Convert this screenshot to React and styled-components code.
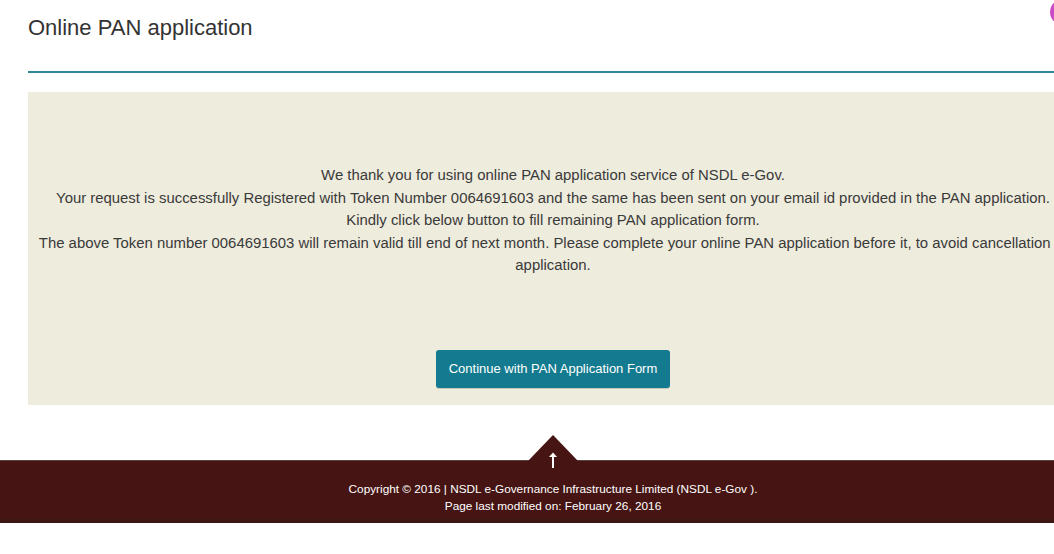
import styled, { createGlobalStyle } from "styled-components";

const GlobalStyle = createGlobalStyle`
  html, body {
    margin: 0;
    padding: 0;
    overflow: hidden;
    background: #fff;
  }
  body {
    font-family: "Liberation Sans", Arial, sans-serif;
    color: #333;
  }
`;

const Page = styled.div`
  position: relative;
  width: 1106px;
`;

const Main = styled.main`
  margin: 0 28px;
`;

const Header = styled.header`
  box-sizing: border-box;
  height: 73px;
  padding-top: 15px;
  border-bottom: 2px solid #2f8898;
`;

const Title = styled.h1`
  margin: 0;
  font-size: 22px;
  font-weight: normal;
  line-height: 26px;
  color: #333;
`;

const Panel = styled.section`
  margin-top: 19px;
  height: 313px;
  box-sizing: border-box;
  padding: 72px 0 0;
  background: #eeecdd;
  text-align: center;
  display: flex;
  flex-direction: column;
  align-items: center;
`;

const Message = styled.p`
  margin: 0;
  font-size: 14.9px;
  line-height: 22.5px;
  color: #3a3a3a;
`;

const Button = styled.button`
  margin-top: 73px;
  height: 38px;
  padding: 0 13px;
  border: none;
  border-radius: 3px;
  background: #137a8f;
  color: #fff;
  font-family: "Liberation Sans", Arial, sans-serif;
  font-size: 13px;
  cursor: pointer;
  box-shadow: 0 1px 0 rgba(0, 0, 0, 0.15);
`;

const Footer = styled.footer`
  position: relative;
  margin-top: 55px;
  height: 63px;
  box-sizing: border-box;
  padding-top: 20px;
  background: #461513;
  border-top: 1px solid #5a4442;
  border-bottom: 4px solid #3d1513;
  text-align: center;
  color: #fff;
  font-size: 11.8px;
  line-height: 17px;
`;

const ToTop = styled.a`
  position: absolute;
  left: 50%;
  top: -26px;
  margin-left: -25px;
  width: 50px;
  height: 26px;
  background: #461513;
  clip-path: polygon(50% 0, 100% 100%, 0 100%);
`;

const ArrowIcon = styled.svg`
  position: absolute;
  left: 50%;
  top: -10px;
  margin-left: -5px;
`;

const Blob = styled.div`
  position: absolute;
  left: 1050px;
  top: 2px;
  width: 14px;
  height: 20px;
  border-radius: 50%;
  background: #c94bc6;
`;

const Line = styled.div``;

export default function App() {
  return (
    <Page>
      <GlobalStyle />
      <Blob />
      <Main>
        <Header>
          <Title>Online PAN application</Title>
        </Header>
        <Panel>
          <Message>
            We thank you for using online PAN application service of NSDL e-Gov.
            <br />
            Your request is successfully Registered with Token Number 0064691603 and the same has been sent on your email id provided in the PAN application.
            <br />
            Kindly click below button to fill remaining PAN application form.
            <br />
            The above Token number 0064691603 will remain valid till end of next month. Please complete your online PAN application before it, to avoid cancellation of
            <br />
            application.
          </Message>
          <Button>Continue with PAN Application Form</Button>
        </Panel>
      </Main>
      <Footer>
        <ToTop href="#top" aria-label="Back to top" />
        <ArrowIcon width="10" height="18" viewBox="0 0 10 18">
          <path d="M5 17V3" stroke="#fff" strokeWidth="2" fill="none" />
          <path d="M1 6L5 1.5L9 6Z" fill="#fff" />
        </ArrowIcon>
        <Line>Copyright © 2016 | NSDL e-Governance Infrastructure Limited (NSDL e-Gov ).</Line>
        <Line>Page last modified on: February 26, 2016</Line>
      </Footer>
    </Page>
  );
}
